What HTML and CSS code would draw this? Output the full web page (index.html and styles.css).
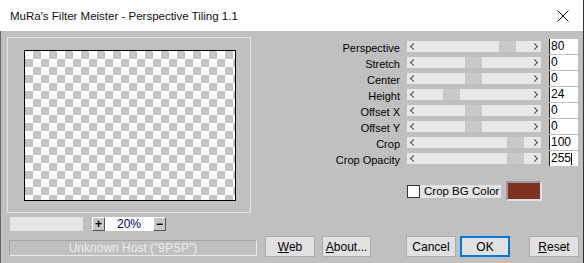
FILE: index.html
```html
<!DOCTYPE html>
<html lang="en">
<head>
    <meta charset="UTF-8">
    <title>MuRa's Filter Meister - Perspective Tiling 1.1</title>
    <link rel="stylesheet" href="styles.css">
</head>
<body>
    <div class="window">
        <div class="titlebar">
            <span class="title">MuRa's Filter Meister - Perspective Tiling 1.1</span>
            <svg class="close" width="12" height="12" viewBox="0 0 12 12">
                <path d="M0.5 0.5 L11.5 11.5 M11.5 0.5 L0.5 11.5" stroke="#111" stroke-width="1" fill="none"/>
            </svg>
        </div>
        <div class="client">
            <div class="left">
                <div class="preview-frame">
                    <div class="preview"></div>
                </div>
                <div class="zoom-row">
                    <div class="zoom-blank"></div>
                    <div class="zoom-field">
                        <span class="zbtn">+</span>
                        <span class="zval">20%</span>
                        <span class="zbtn">&minus;</span>
                    </div>
                </div>
                <div class="status">Unknown Host ("9PSP")</div>
            </div>
            <div class="right">
                <div class="sliders">
                    <div class="row">
                        <span class="label">Perspective</span>
                        <div class="track"><span class="arrow arrow-l"></span><div class="inner"><span class="thumb" style="margin-left: 75px"></span></div><span class="arrow arrow-r"></span></div>
                        <span class="value">80</span>
                    </div>
                    <div class="row">
                        <span class="label">Stretch</span>
                        <div class="track"><span class="arrow arrow-l"></span><div class="inner"><span class="thumb" style="margin-left: 41px"></span></div><span class="arrow arrow-r"></span></div>
                        <span class="value">0</span>
                    </div>
                    <div class="row">
                        <span class="label">Center</span>
                        <div class="track"><span class="arrow arrow-l"></span><div class="inner"><span class="thumb" style="margin-left: 41px"></span></div><span class="arrow arrow-r"></span></div>
                        <span class="value">0</span>
                    </div>
                    <div class="row">
                        <span class="label">Height</span>
                        <div class="track"><span class="arrow arrow-l"></span><div class="inner"><span class="thumb" style="margin-left: 19px"></span></div><span class="arrow arrow-r"></span></div>
                        <span class="value">24</span>
                    </div>
                    <div class="row">
                        <span class="label">Offset X</span>
                        <div class="track"><span class="arrow arrow-l"></span><div class="inner"><span class="thumb" style="margin-left: 41px"></span></div><span class="arrow arrow-r"></span></div>
                        <span class="value">0</span>
                    </div>
                    <div class="row">
                        <span class="label">Offset Y</span>
                        <div class="track"><span class="arrow arrow-l"></span><div class="inner"><span class="thumb" style="margin-left: 41px"></span></div><span class="arrow arrow-r"></span></div>
                        <span class="value">0</span>
                    </div>
                    <div class="row">
                        <span class="label">Crop</span>
                        <div class="track"><span class="arrow arrow-l"></span><div class="inner"><span class="thumb" style="margin-left: 83px"></span></div><span class="arrow arrow-r"></span></div>
                        <span class="value">100</span>
                    </div>
                    <div class="row">
                        <span class="label">Crop Opacity</span>
                        <div class="track"><span class="arrow arrow-l"></span><div class="inner"><span class="thumb" style="margin-left: 83px"></span></div><span class="arrow arrow-r"></span></div>
                        <span class="value">255<span class="caret"></span></span>
                    </div>
                </div>
                <div class="bg-row">
                    <span class="checkbox"></span>
                    <span class="check-label">Crop BG Color</span>
                    <span class="swatch"></span>
                </div>
                <div class="buttons">
                    <button class="btn"><u>W</u>eb</button>
                    <button class="btn btn-about"><u>A</u>bout...</button>
                    <button class="btn btn-cancel">Cancel</button>
                    <button class="btn btn-ok">OK</button>
                    <button class="btn btn-reset"><u>R</u>eset</button>
                </div>
            </div>
        </div>
    </div>
</body>
</html>
```

FILE: styles.css
```css
body {
    margin: 0;
    padding: 0;
    background-color: #c0c0c0;
    font-family: "Liberation Sans", Arial, sans-serif;
    font-size: 11px;
    color: #000;
}

.window {
    width: 584px;
    height: 263px;
    box-sizing: border-box;
    border-right: 1px solid #2e2e2e;
    overflow: hidden;
}

.titlebar {
    height: 31px;
    background-color: #fff;
    display: flex;
    align-items: center;
    padding: 0 14px 0 10px;
}

.title {
    font-size: 11.5px;
    flex: 1;
    color: #111;
}

.client {
    height: 232px;
    display: flex;
    background-color: #c0c0c0;
    border-left: 1px solid #6a6270;
}

/* left side: preview */
.left {
    width: 251px;
    padding: 6px 0 0 6px;
}

.preview-frame {
    width: 244px;
    height: 176px;
    border: 1px solid #e2e2e2;
    display: flex;
    justify-content: center;
    align-items: center;
    padding: 1px 0 0 0;
    box-sizing: border-box;
}

.preview {
    width: 210px;
    height: 149px;
    border: 1px solid #000;
    margin: 0 0 0 1px;
    background: repeating-conic-gradient(#c4c4c4 0 25%, #fff 0 50%) 0 0 / 16px 16px;
}

.zoom-row {
    display: flex;
    gap: 9px;
    margin: 4px 0 0 3px;
    height: 14px;
}

.zoom-blank {
    width: 73px;
    background-color: #e6e6e6;
}

.zoom-field {
    width: 74px;
    background-color: #fff;
    display: flex;
    align-items: center;
}

.zbtn {
    width: 11px;
    height: 12px;
    background-color: #c8c8c8;
    border: 1px solid #fff;
    border-right-color: #555;
    border-bottom-color: #555;
    font-weight: bold;
    font-size: 12px;
    line-height: 12px;
    text-align: center;
}

.zval {
    flex: 1;
    text-align: center;
    color: #000080;
    font-size: 12px;
}

.status {
    margin: 9px 0 0 2px;
    width: 248px;
    height: 16px;
    box-sizing: border-box;
    border: 1px solid #a6a6a6;
    border-right-color: #e8e8e8;
    border-bottom-color: #e8e8e8;
    color: #ececec;
    text-align: center;
    line-height: 14px;
    font-size: 12px;
}

/* right side: controls */
.right {
    flex: 1;
    display: flex;
    flex-direction: column;
    padding: 8px 0 0 7px;
}

.sliders {
    display: flex;
    flex-direction: column;
    gap: 1px;
}

.row {
    display: flex;
    align-items: flex-start;
    height: 15px;
}

.label {
    width: 135px;
    text-align: right;
    line-height: 15px;
    margin-top: 2px;
}

.track {
    margin-left: 7px;
    margin-top: 2px;
    width: 134px;
    height: 11px;
    background-color: #e8e8e8;
    display: flex;
}

.arrow {
    width: 17px;
    display: flex;
    align-items: center;
    justify-content: center;
}

.arrow::before {
    content: "";
    width: 4px;
    height: 4px;
    border-left: 1.5px solid #4a4a4a;
    border-bottom: 1.5px solid #4a4a4a;
}

.arrow-l::before {
    transform: translateX(-2px) rotate(45deg);
}

.arrow-r::before {
    transform: translateX(2px) rotate(-135deg);
}

.inner {
    width: 100px;
    display: flex;
}

.thumb {
    width: 17px;
    height: 11px;
    background-color: #c9c9c9;
}

.value {
    margin-left: 8px;
    width: 29px;
    height: 15px;
    box-sizing: border-box;
    background-color: #fff;
    border-left: 1px solid #222;
    padding-left: 1px;
    font-size: 12px;
    line-height: 15px;
    display: flex;
    align-items: center;
}

.caret {
    width: 1px;
    height: 12px;
    background-color: #000;
}

.bg-row {
    display: flex;
    align-items: center;
    margin: 15px 0 0 142px;
    height: 20px;
}

.checkbox {
    width: 11px;
    height: 11px;
    background-color: #fff;
    border: 1px solid #333;
}

.check-label {
    width: 77px;
    height: 13px;
    background-color: #e4e4e4;
    padding-left: 4px;
    font-size: 11.5px;
    line-height: 13px;
    white-space: nowrap;
}

.swatch {
    margin-left: 5px;
    width: 36px;
    height: 20px;
    box-sizing: border-box;
    background-color: #7f3222;
    border: 2px solid #e2e2e2;
    border-top-color: #9a9a9a;
    border-left-color: #9a9a9a;
}

.buttons {
    display: flex;
    margin: 35px 0 0 0;
}

.btn {
    width: 50px;
    height: 21px;
    background-color: #e1e1e1;
    border: 1px solid #adadad;
    font-family: "Liberation Sans", Arial, sans-serif;
    font-size: 12px;
    color: #000;
    padding: 0;
}

.btn-about {
    width: 49px;
    margin-left: 7px;
}

.btn-cancel {
    margin-left: 35px;
}

.btn-ok {
    margin-left: 4px;
    border: 2px solid #0078d7;
}

.btn-reset {
    margin-left: 19px;
}
```
